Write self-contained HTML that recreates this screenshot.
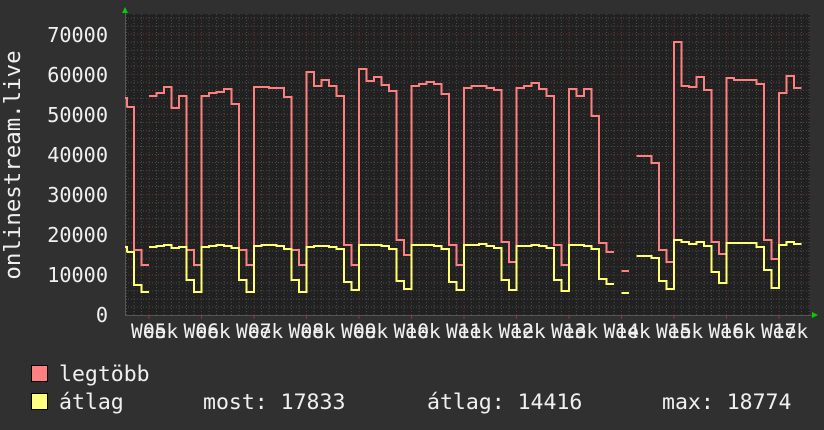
<!DOCTYPE html>
<html><head><meta charset="utf-8"><style>
html,body{margin:0;padding:0;background:#303030;}
svg{display:block}
text{font-family:"DejaVu Sans Mono","Liberation Mono",monospace;fill:#f0f0f0;font-size:21.5px}
</style></head><body>
<svg id="s" width="824" height="430" xmlns="http://www.w3.org/2000/svg">
<rect width="824" height="430" fill="#303030"/>
<rect x="125" y="14" width="685" height="301" fill="#212121"/>
<g id="grid"></g>
<g id="lines"></g>
<g style="font-size:20.2px">
<text x="108" y="42" text-anchor="end" style="font-size:20.2px">70000</text>
<text x="108" y="82" text-anchor="end" style="font-size:20.2px">60000</text>
<text x="108" y="122" text-anchor="end" style="font-size:20.2px">50000</text>
<text x="108" y="162" text-anchor="end" style="font-size:20.2px">40000</text>
<text x="108" y="202" text-anchor="end" style="font-size:20.2px">30000</text>
<text x="108" y="242" text-anchor="end" style="font-size:20.2px">20000</text>
<text x="108" y="282" text-anchor="end" style="font-size:20.2px">10000</text>
<text x="108" y="322" text-anchor="end" style="font-size:20.2px">0</text>
</g>
<text transform="translate(20,165) rotate(-90)" text-anchor="middle" style="font-size:22.4px">onlinestream.live</text>
<g id="xl"></g>
<polygon points="122,13 128,13 125,7" fill="#00d000"/>
<polygon points="812,312 812,318 818,315" fill="#00d000"/>
<rect x="31.5" y="365.5" width="16" height="16" fill="#ff8080" stroke="#000"/>
<rect x="31.5" y="393.5" width="16" height="16" fill="#ffff80" stroke="#000"/>
<text x="59" y="381">legtöbb</text>
<text x="59" y="409">átlag</text>
<text x="203" y="409">most: 17833</text>
<text x="427" y="409">átlag: 14416</text>
<text x="662" y="409">max: 18774</text>
</svg>
<script>
var NS="http://www.w3.org/2000/svg";
function el(p,t,a){var e=document.createElementNS(NS,t);for(var k in a)e.setAttribute(k,a[k]);p.appendChild(e);return e;}
var g=document.getElementById('grid');
for(var v=2000;v<=74000;v+=2000){var y=315-v*0.004012;if(v%10000==0)continue;el(g,'line',{x1:125,x2:810,y1:y,y2:y,stroke:'#4a4a4a','stroke-dasharray':'1,2','stroke-width':1});}
for(var x=149-7.5*3;x<810;x+=7.5){el(g,'line',{x1:x,x2:x,y1:14,y2:315,stroke:'#4a4a4a','stroke-dasharray':'1,2','stroke-width':1});}
for(var v=10000;v<=70000;v+=10000){var y=315-v*0.004012;el(g,'line',{x1:125,x2:810,y1:y,y2:y,stroke:'#6a3434','stroke-dasharray':'1,2','stroke-width':1});}
for(var k=0;k<13;k++){var x=149+52.5*k;el(g,'line',{x1:x,x2:x,y1:14,y2:315,stroke:'#6a3434','stroke-dasharray':'1,2','stroke-width':1});el(g,'line',{x1:x,x2:x,y1:315,y2:319,stroke:'#a03030'});}
el(g,'line',{x1:125,x2:812,y1:315.5,y2:315.5,stroke:'#555'});
el(g,'line',{x1:125.5,x2:125.5,y1:12,y2:315,stroke:'#555'});
var xl=document.getElementById('xl');
for(var k=0;k<13;k++){var x=131+52.5*k;el(xl,'text',{x:x,y:338,style:'font-size:19.6px'}).textContent='Week';el(xl,'text',{x:x+12,y:338,style:'font-size:19.6px'}).textContent=String(5+k).padStart(2,'0');}
var P=[[126.5,[107,250,265]],[149,[96,93,87,108,96,250,265,96,93,92,89,104,250,265,87,87,88,88,97,250,265,72,86,80,86,96,245,265,69,81,77,85,91,240,255,86,84,82,84,94,245,265,88,86,86,88,90,242,262,88,86,83,89,96,245,265,89,96,89,116,243,252]],[621.5,[271]],[636.5,[156,156,163,250,262,42,86,87,77,90,242,254,78,80,80,80,84,240,259,93,76,88]]];
var Y=[[126.5,[252,285,292]],[149,[247,246,245,248,247,280,292,247,246,245,246,248,280,292,246,245,245,246,249,280,292,247,246,246,247,249,282,290,245,245,245,246,249,281,289,245,245,245,246,249,282,290,245,245,244,246,248,280,290,246,246,245,246,248,280,291,245,245,246,249,279,284]],[621.5,[293]],[636.5,[256,256,258,281,289,240,242,244,242,246,272,283,243,243,243,243,247,270,288,245,242,244]]];
function draw(D,c,first){var L=document.getElementById('lines');D.forEach(function(s,i){var x=s[0],d='';s[1].forEach(function(v,j){d+=(j==0?'M':'L')+x+','+v+'L'+(x+7.5)+','+v;x+=7.5;});if(i==0)d='M125,'+first+'L127,'+first+'L127,'+s[1][0]+d.replace(/^M/,'L');el(L,'path',{d:d,fill:'none',stroke:c,'stroke-width':2});});}
draw(P,'#ff8080',98);draw(Y,'#ffff70',247);
</script>
</body></html>
